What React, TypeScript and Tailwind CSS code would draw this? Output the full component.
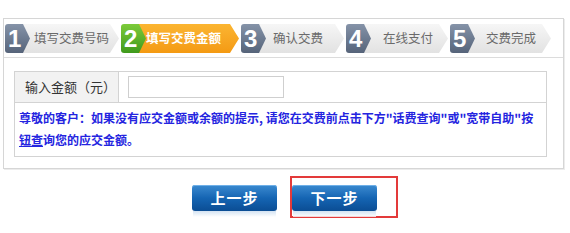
import React from "react";

const steps = [
  { n: "1", label: "填写交费号码", w: "w-[114px]", pl: "pl-[13px]", active: false },
  { n: "2", label: "填写交费金额", w: "w-[118px]", pl: "pl-[9px]", active: true },
  { n: "3", label: "确认交费", w: "w-[103px]", pl: "pl-[16px]", active: false },
  { n: "4", label: "在线支付", w: "w-[102px]", pl: "pl-[21px]", active: false },
  { n: "5", label: "交费完成", w: "w-[101px]", pl: "pl-[20px]", active: false },
];

type StepProps = { n: string; label: string; w: string; pl: string; active: boolean };

const Step = ({ n, label, w, pl, active }: StepProps) => (
  <div className={`flex h-[29px] ${w}`}>
    <div
      className={`relative z-10 w-[25px] shrink-0 rounded-l-[3px] flex items-center pl-[3px] text-[24px] leading-none font-bold text-white [clip-path:polygon(0_0,72%_0,100%_50%,72%_100%,0_100%)] ${
        active ? "bg-gradient-to-b from-[#7ccb3a] to-[#3f9a1c]" : "bg-gradient-to-b from-[#8593a8] to-[#56647a]"
      }`}
      style={{ fontFamily: "'Liberation Sans', Arial, sans-serif" }}
    >
      {n}
    </div>
    <div
      className={`-ml-[9px] flex-1 flex items-center whitespace-nowrap text-[12.5px] [clip-path:polygon(0_0,calc(100%-9px)_0,100%_50%,calc(100%-9px)_100%,0_100%,8px_50%)] ${pl} ${
        active
          ? "bg-gradient-to-b from-[#fbb531] to-[#f49a12] text-white font-bold"
          : "bg-gradient-to-b from-[#f6f6f6] to-[#e2e2e2] text-[#6a6a6a]"
      }`}
    >
      {label}
    </div>
  </div>
);

const Button = ({ text }: { text: string }) => (
  <div className="flex flex-col items-center w-[85px]">
    <div className="w-[85px] h-[26px] rounded-[3px] bg-gradient-to-b from-[#3a8ad0] via-[#1565b3] to-[#0b4d94] flex items-center justify-center text-white text-[15px] font-bold tracking-[1px] shadow-[inset_0_1px_0_#6fb0e8]">
      {text}
    </div>
    <div className="w-[83px] h-[6px] bg-gradient-to-b from-[#c9dcef] to-white opacity-80" />
  </div>
);

export default function App() {
  return (
    <div
      className="w-[570px] h-[233px] bg-white pt-[18px] pl-[3px]"
      style={{ fontFamily: "'Noto Sans CJK SC', 'Noto Sans', sans-serif" }}
    >
      <div className="w-[561px] h-[151px] border border-[#d6d6d6] shadow-[1px_1px_0_#ececec]">
        <div className="h-[39px] border-b border-[#dcdcdc] flex items-center gap-[2px] pl-[1px] pt-[1px]">
          {steps.map((s) => (
            <Step key={s.n} {...s} />
          ))}
        </div>
        <div className="mt-[13px] ml-[10px] w-[533px] border border-[#d3d3d3]">
          <div className="flex h-[31px] border-b border-[#d3d3d3]">
            <div className="w-[104px] bg-[#f2f2f2] border-r border-[#d3d3d3] flex items-center pl-[10px] text-[13px] text-[#333]">
              输入金额（元）
            </div>
            <div className="flex items-center pl-[9px]">
              <div className="w-[156px] h-[22px] border border-[#cfcfcf] bg-white" />
            </div>
          </div>
          <div className="px-[4px] pt-[4px] pb-[5px] text-[12px] leading-[22px] font-bold text-[#2424e0]">
            尊敬的客户：如果没有应交金额或余额的提示, 请您在交费前点击下方"话费查询"或"宽带自助"按
            <br />
            <span className="underline">钮查</span>询您的应交金额。
          </div>
        </div>
      </div>
      <div className="flex mt-[15px] ml-[189px] gap-[15px]">
        <div className="pt-[1px]">
          <Button text="上一步" />
        </div>
        <div className="-mt-[8px] -ml-[2px] border-2 border-[#e33a3a] w-[108px] h-[42px] pt-[7px]">
          <Button text="下一步" />
        </div>
      </div>
    </div>
  );
}
